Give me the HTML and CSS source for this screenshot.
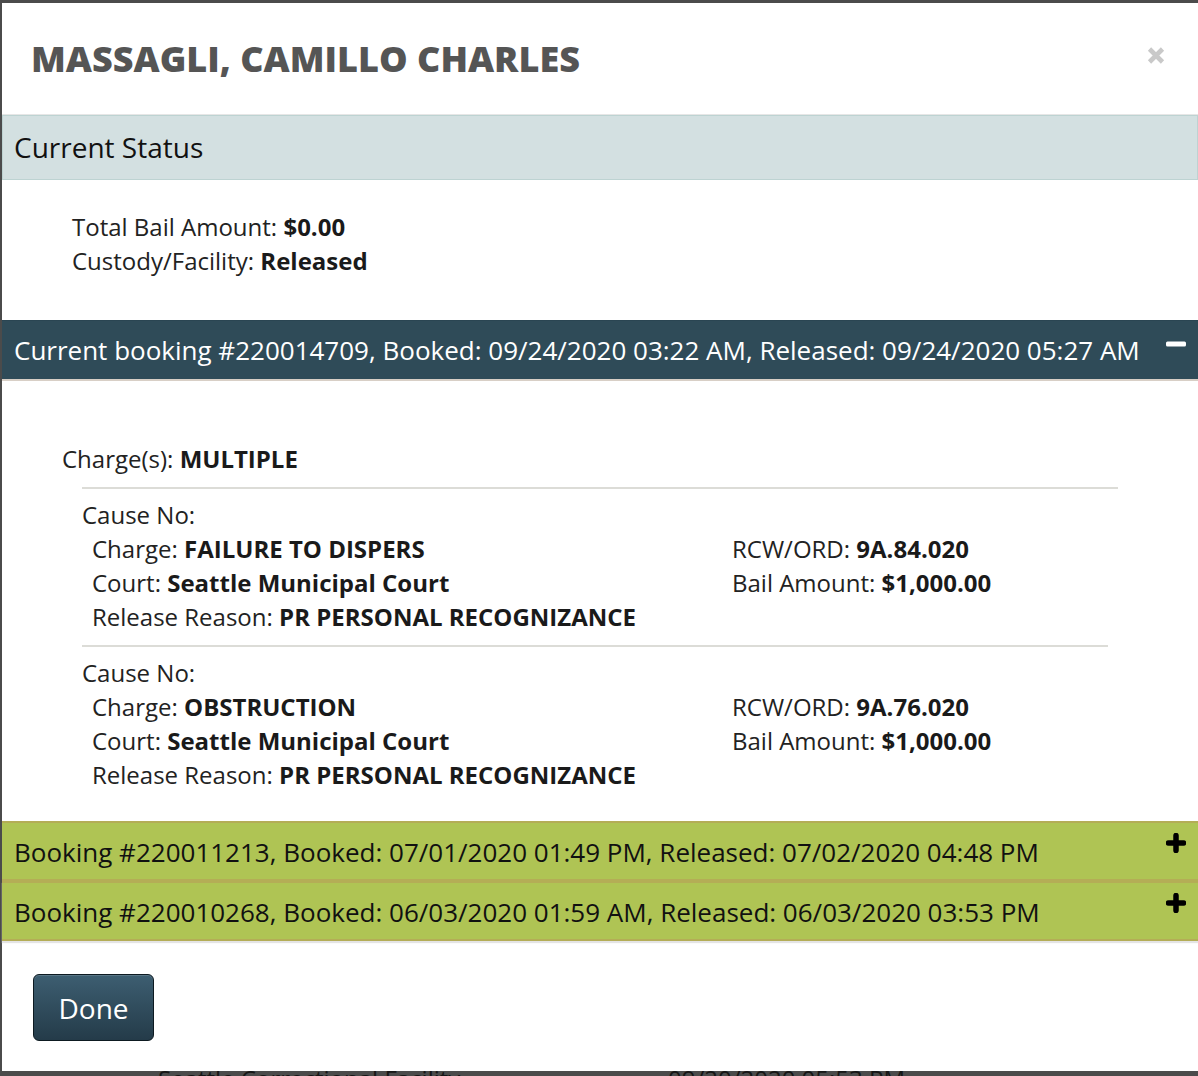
FILE: index.html
```html
<!DOCTYPE html>
<html lang="en">
<head>
<meta charset="utf-8">
<title>Inmate details</title>
<link rel="stylesheet" href="styles.css">
</head>
<body>
<div class="page">
  <div class="peek-row">
    <span class="peek-a">Seattle Correctional Facility</span>
    <span class="peek-b">09/20/2020 05:53 PM</span>
  </div>
</div>

<div class="modal">
  <div class="modal-header">
    <h1 class="title">MASSAGLI, CAMILLO CHARLES</h1>
    <button class="close" aria-label="Close">
      <svg width="18" height="19" viewBox="0 0 18 19"><path d="M2.5 3 L15.5 16 M15.5 3 L2.5 16" stroke="#c9c9c9" stroke-width="4.6" stroke-linecap="butt"/></svg>
    </button>
  </div>

  <div class="status-bar">Current Status</div>
  <div class="status-body">
    <div class="line">Total Bail Amount: <b>$0.00</b></div>
    <div class="line">Custody/Facility: <b>Released</b></div>
  </div>

  <div class="booking-bar current">
    <span>Current booking #220014709, Booked: 09/24/2020 03:22 AM, Released: 09/24/2020 05:27 AM</span>
    <svg class="toggle" width="20" height="20" viewBox="0 0 20 20"><rect x="0" y="7.5" width="20" height="5" rx="1.5" fill="#fff"/></svg>
  </div>
  <div class="booking-body">
    <div class="line">Charge(s): <b>MULTIPLE</b></div>
    <div class="charges">
      <div class="charge">
        <div class="line">Cause No:</div>
        <div class="charge-grid">
          <div class="line">Charge: <b>FAILURE TO DISPERS</b></div>
          <div class="line">RCW/ORD: <b>9A.84.020</b></div>
          <div class="line">Court: <b>Seattle Municipal Court</b></div>
          <div class="line">Bail Amount: <b>$1,000.00</b></div>
          <div class="line">Release Reason: <b>PR PERSONAL RECOGNIZANCE</b></div>
          <div class="line"></div>
        </div>
      </div>
      <div class="charge">
        <div class="line">Cause No:</div>
        <div class="charge-grid">
          <div class="line">Charge: <b>OBSTRUCTION</b></div>
          <div class="line">RCW/ORD: <b>9A.76.020</b></div>
          <div class="line">Court: <b>Seattle Municipal Court</b></div>
          <div class="line">Bail Amount: <b>$1,000.00</b></div>
          <div class="line">Release Reason: <b>PR PERSONAL RECOGNIZANCE</b></div>
          <div class="line"></div>
        </div>
      </div>
    </div>
  </div>

  <div class="booking-bar past">
    <span>Booking #220011213, Booked: 07/01/2020 01:49 PM, Released: 07/02/2020 04:48 PM</span>
    <svg class="toggle" width="20" height="20" viewBox="0 0 20 20"><path d="M10 2.5 V17.5 M2.5 10 H17.5" stroke="#000" stroke-width="5.5" stroke-linecap="round"/></svg>
  </div>
  <div class="booking-bar past last">
    <span>Booking #220010268, Booked: 06/03/2020 01:59 AM, Released: 06/03/2020 03:53 PM</span>
    <svg class="toggle" width="20" height="20" viewBox="0 0 20 20"><path d="M10 2.5 V17.5 M2.5 10 H17.5" stroke="#000" stroke-width="5.5" stroke-linecap="round"/></svg>
  </div>

  <div class="modal-footer">
    <button class="done">Done</button>
  </div>
</div>
</body>
</html>
```

FILE: styles.css
```css
* { box-sizing: border-box; }

html, body {
  margin: 0;
  padding: 0;
}

body {
  width: 1198px;
  height: 1076px;
  overflow: hidden;
  position: relative;
  background: #4b4b4b;
  font-family: "Open Sans", "DejaVu Sans", sans-serif;
  color: #222;
}

.page {
  height: 1076px;
  display: flex;
  flex-direction: column;
  justify-content: flex-end;
  overflow: hidden;
}

.peek-row {
  display: flex;
  height: 34px;
  margin-bottom: -20px;
  font-size: 24px;
  line-height: 34px;
  color: #161616;
}

.peek-a { margin-left: 158px; width: 510px; }

.modal {
  position: absolute;
  top: 3px;
  left: 2px;
  width: 1196px;
  height: 1068px;
  background: #fff;
  display: flex;
  flex-direction: column;
}

.modal-header {
  height: 112px;
  border-bottom: 1px solid #e6e6e6;
  display: flex;
  align-items: center;
  justify-content: space-between;
  padding: 0 33px 0 29px;
}

.title {
  margin: 0;
  font-size: 36px;
  font-weight: 800;
  color: #555;
  line-height: 40px;
  letter-spacing: 0;
}

.close {
  border: 0;
  background: none;
  padding: 0;
  width: 18px;
  height: 19px;
  display: flex;
  margin-top: -6px;
}

.status-bar {
  height: 65px;
  background: #d3e0e1;
  border: 1px solid #bdd3d2;
  font-size: 28px;
  line-height: 62px;
  padding-left: 11px;
  color: #111;
}

.line {
  font-size: 24px;
  line-height: 34px;
  min-height: 34px;
}

.line b { font-weight: 700; color: #1a1a1a; }

.status-body {
  padding: 30px 0 42px 70px;
}

.booking-bar {
  display: flex;
  justify-content: space-between;
  align-items: flex-start;
  font-size: 26px;
  padding: 0 12px 0 12px;
}

.booking-bar span { line-height: 58px; }

.booking-bar .toggle { margin-top: 13px; flex: none; }

.booking-bar.current {
  height: 61px;
  background: #2f4b58;
  color: #fff;
  border-top: 1px solid #2a4552;
  border-bottom: 2px solid #d8cfc6;
}

.booking-bar.current .toggle { margin-top: 13px; }

.booking-bar.past {
  height: 60px;
  background: #afc454;
  color: #111;
  border-top: 2px solid #b4ad56;
  border-bottom: 2px solid #b4ad56;
}

.booking-bar.past span { line-height: 58px; }
.booking-bar.past .toggle { margin-top: 10px; }

.booking-bar.last {
  box-shadow: 0 2px 1px #e4e4e4;
}

.booking-body {
  padding: 61px 0 18px 60px;
}

.charges {
  margin: 11px 80px 0 20px;
  border-top: 2px solid #dcdcd7;
}

.charge {
  padding: 9px 0 11px 0;
}

.charge + .charge {
  border-top: 2px solid #dcdcd7;
  margin-right: 10px;
}

.charge-grid {
  display: grid;
  grid-template-columns: 640px 1fr;
  padding-left: 10px;
}

.modal-footer {
  padding: 33px 0 0 31px;
}

.done {
  width: 121px;
  height: 67px;
  border: 1px solid #0d1a21;
  border-radius: 6px;
  background: linear-gradient(#3d5e71, #243b49);
  color: #fff;
  font-family: "Open Sans", "DejaVu Sans", sans-serif;
  font-size: 28px;
  padding: 0;
  box-shadow: inset 0 1px 0 rgba(255,255,255,0.15);
}
```
